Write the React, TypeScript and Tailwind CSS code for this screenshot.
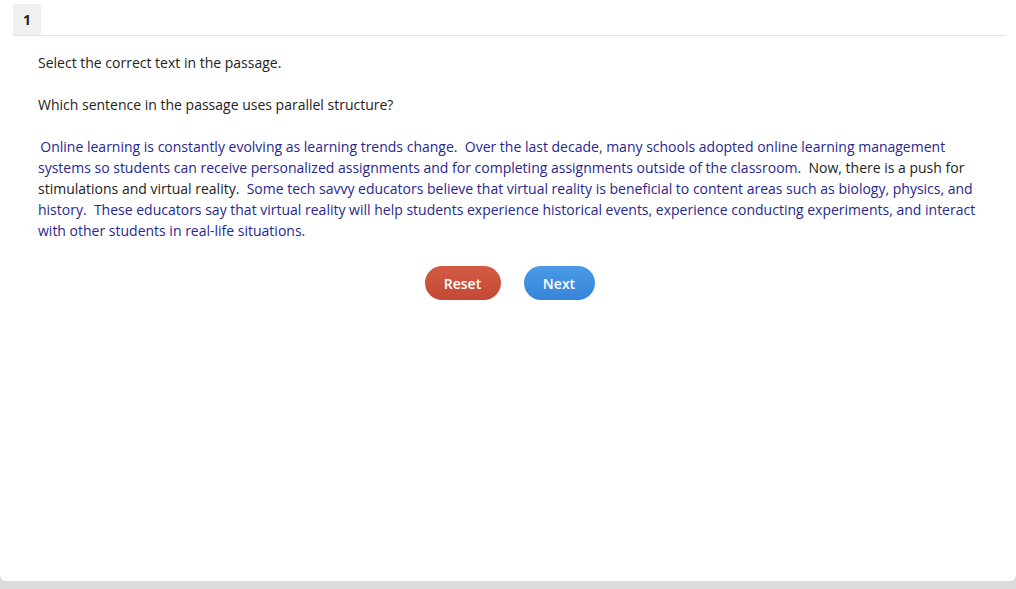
import React from 'react';

const passage: { text: string; selectable: boolean }[] = [
  { text: 'Online learning is constantly evolving as learning trends change.', selectable: true },
  { text: 'Over the last decade, many schools adopted online learning management systems so students can receive personalized assignments and for completing assignments outside of the classroom.', selectable: true },
  { text: 'Now, there is a push for stimulations and virtual reality.', selectable: false },
  { text: 'Some tech savvy educators believe that virtual reality is beneficial to content areas such as biology, physics, and history.', selectable: true },
  { text: 'These educators say that virtual reality will help students experience historical events, experience conducting experiments, and interact with other students in real-life situations.', selectable: true },
];

const App: React.FC = () => {
  return (
    <div
      className="w-[1016px] h-[589px] bg-[#dcdcdc] overflow-hidden"
      style={{ fontFamily: '"Open Sans", "Liberation Sans", sans-serif' }}
    >
      <div className="h-[581px] bg-white rounded-b-[6px] pt-[4px] px-[13px] pr-[10px]">
        {/* Tabs */}
        <div className="flex border-b border-[#e4e4e4]">
          <div className="w-[28px] h-[31px] bg-[#f0f0f0] flex items-center justify-center text-[14px] font-bold text-[#222]">
            1
          </div>
        </div>

        {/* Question */}
        <div className="pl-[25px] pr-[20px] text-[14px] leading-[21px] text-[#222]">
          <p className="mt-[16px]">Select the correct text in the passage.</p>
          <p className="mt-[21px]">Which sentence in the passage uses parallel structure?</p>
          <p className="mt-[21px]">
            {passage.map((s, i) => (
              <React.Fragment key={i}>
                {i === 0 ? '\u2009' : '\u00a0'}
                <span className={s.selectable ? 'text-[#27278f] cursor-pointer' : 'text-[#222]'}>{s.text}</span>
                {i === passage.length - 1 ? '' : '\u00a0'}
              </React.Fragment>
            ))}
          </p>
        </div>

        {/* Buttons */}
        <div className="flex justify-center gap-[23px] mt-[25px]">
          <button className="w-[76px] h-[34px] rounded-full bg-gradient-to-b from-[#d45a43] to-[#c24a34] text-white text-[14px] font-semibold">
            Reset
          </button>
          <button className="w-[71px] h-[34px] rounded-full bg-gradient-to-b from-[#4a9ae6] to-[#3584d8] text-white text-[14px] font-semibold">
            Next
          </button>
        </div>
      </div>
    </div>
  );
};

export default App;
